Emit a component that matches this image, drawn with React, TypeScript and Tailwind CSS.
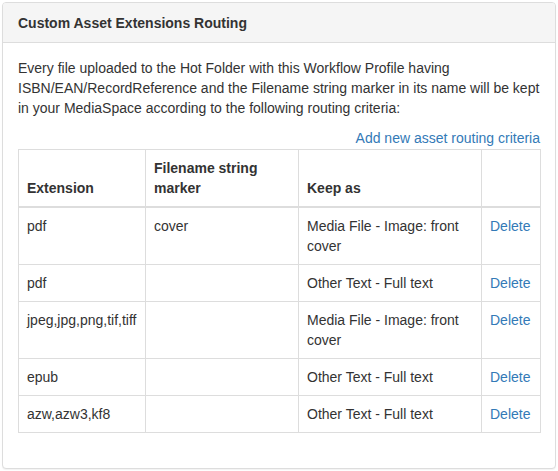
import React from "react";

type Route = { ext: string; marker: string; keepAs: string };

const routes: Route[] = [
  { ext: "pdf", marker: "cover", keepAs: "Media File - Image: front cover" },
  { ext: "pdf", marker: "", keepAs: "Other Text - Full text" },
  { ext: "jpeg,jpg,png,tif,tiff", marker: "", keepAs: "Media File - Image: front cover" },
  { ext: "epub", marker: "", keepAs: "Other Text - Full text" },
  { ext: "azw,azw3,kf8", marker: "", keepAs: "Other Text - Full text" },
];

const App = () => {
  return (
    <div
      className="min-h-screen bg-white p-[2px] text-[14px] leading-[20px] text-[#333]"
      style={{ fontFamily: '"Liberation Sans", Arial, sans-serif' }}
    >
      <div className="rounded-[4px] border border-[#ddd] bg-white shadow-[0_1px_1px_rgba(0,0,0,0.05)]">
        <div className="rounded-t-[3px] border-b border-[#ddd] bg-[#f5f5f5] px-[15px] pb-[9px] pt-[11px]">
          <h3 className="text-[14px] font-bold leading-[19px] text-[#333]">
            Custom Asset Extensions Routing
          </h3>
        </div>

        <div className="p-[15px]">
          <p className="mb-[10px]">
            Every file uploaded to the Hot Folder with this Workflow Profile having
            ISBN/EAN/RecordReference and the Filename string marker in its name will be
            kept in your MediaSpace according to the following routing criteria:
          </p>
          <div className="mb-[1px] text-right">
            <a href="#" className="text-[#337ab7] hover:underline">
              Add new asset routing criteria
            </a>
          </div>

          <table className="mb-[20px] w-full table-fixed border-collapse border border-[#ddd]">
            <colgroup>
              <col className="w-[127px]" />
              <col className="w-[153px]" />
              <col className="w-[183px]" />
              <col className="w-[59px]" />
            </colgroup>
            <thead>
              <tr>
                <th className="border border-b-2 border-[#ddd] p-[8px] text-left align-bottom font-bold">
                  Extension
                </th>
                <th className="border border-b-2 border-[#ddd] p-[8px] text-left align-bottom font-bold">
                  Filename string marker
                </th>
                <th className="border border-b-2 border-[#ddd] p-[8px] text-left align-bottom font-bold">
                  Keep as
                </th>
                <th className="border border-b-2 border-[#ddd] p-[8px] text-left align-bottom font-bold"></th>
              </tr>
            </thead>
            <tbody>
              {routes.map((r, i) => (
                <tr key={i}>
                  <td className="border border-[#ddd] p-[8px] align-top">{r.ext}</td>
                  <td className="border border-[#ddd] p-[8px] align-top">{r.marker}</td>
                  <td className="border border-[#ddd] p-[8px] align-top">{r.keepAs}</td>
                  <td className="border border-[#ddd] p-[8px] align-top">
                    <a href="#" className="text-[#337ab7] hover:underline">
                      Delete
                    </a>
                  </td>
                </tr>
              ))}
            </tbody>
          </table>
        </div>
      </div>
    </div>
  );
};

export default App;
